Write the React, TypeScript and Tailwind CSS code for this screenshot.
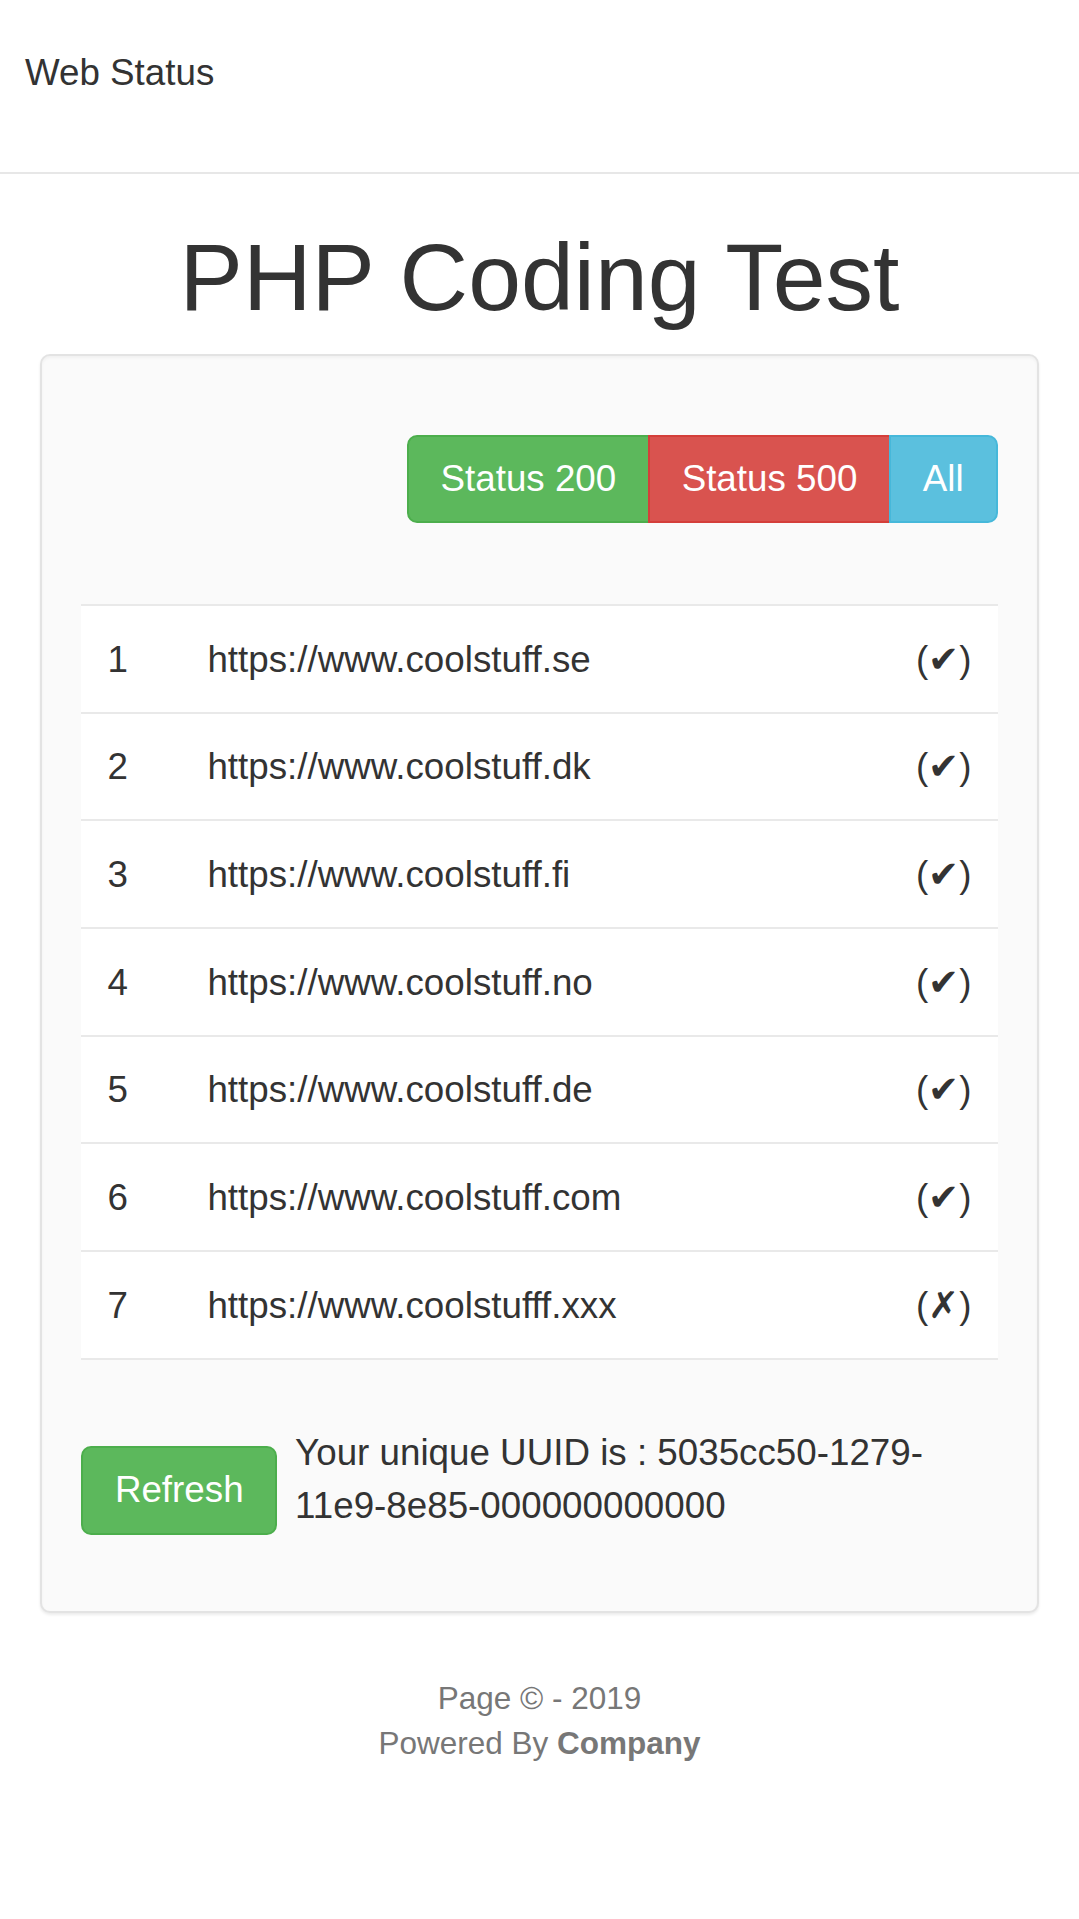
import React from "react";

const rows = [
  { n: 1, url: "https://www.coolstuff.se", ok: true },
  { n: 2, url: "https://www.coolstuff.dk", ok: true },
  { n: 3, url: "https://www.coolstuff.fi", ok: true },
  { n: 4, url: "https://www.coolstuff.no", ok: true },
  { n: 5, url: "https://www.coolstuff.de", ok: true },
  { n: 6, url: "https://www.coolstuff.com", ok: true },
  { n: 7, url: "https://www.coolstufff.xxx", ok: false },
];

export default function App() {
  return (
    <div
      className="min-h-[1919px] bg-white text-[#333] text-[36.75px] leading-[52.5px]"
      style={{ fontFamily: '"Liberation Sans", Arial, Helvetica, sans-serif' }}
    >
      <div className="h-[174px] border-b-[2.6px] border-[#e7e7e7] bg-white pt-[47px] pl-[25px]">
        <span className="text-[#333]">Web Status</span>
      </div>

      <div className="px-[40px]">
        <h1 className="mt-[51px] mb-[24.5px] text-center text-[95px] leading-[1.1] font-normal text-[#333]">
          PHP Coding Test
        </h1>

        <div className="rounded-[10px] border-[2.6px] border-[#e3e3e3] bg-[#fafafa] px-[39.4px] pt-[79px] pb-[76.5px] shadow-[inset_0_2px_3px_rgba(0,0,0,0.04),0_2px_3px_rgba(0,0,0,0.08)]">
          <div className="flex justify-end">
            <div className="flex h-[88px] text-white">
              <button className="rounded-l-[10px] border-[2.6px] border-[#4cae4c] bg-[#5cb85c] px-[32px]">
                Status 200
              </button>
              <button className="-ml-[2.6px] border-[2.6px] border-[#d43f3a] bg-[#d9534f] px-[32px]">
                Status 500
              </button>
              <button className="-ml-[2.6px] rounded-r-[10px] border-[2.6px] border-[#46b8da] bg-[#5bc0de] px-[32px]">
                All
              </button>
            </div>
          </div>

          <div className="mt-[81px] border-b-[2.6px] border-[#e9e9e9]">
            {rows.map((r) => (
              <div
                key={r.n}
                className="flex items-center border-t-[2.6px] border-[#e9e9e9] bg-white px-[26px] pt-[2px] h-[107.7px]"
              >
                <span className="w-[100px]">{r.n}</span>
                <span className="flex-1">{r.url}</span>
                <span>({r.ok ? "✔" : "✗"})</span>
              </div>
            ))}
          </div>

          <div className="mt-[65px] flex items-start">
            <button className="mt-[21px] h-[89px] shrink-0 rounded-[10px] border-[2.6px] border-[#4cae4c] bg-[#5cb85c] px-[31.5px] text-white">
              Refresh
            </button>
            <p className="ml-[18px] mt-[2.5px] flex-1">
              Your unique UUID is : 5035cc50-1279-11e9-8e85-000000000000
            </p>
          </div>
        </div>

        <div className="mt-[63px] text-center text-[31.5px] leading-[45px] text-[#777]">
          <div>Page © - 2019</div>
          <div>
            Powered By <b className="font-bold">Company</b>
          </div>
        </div>
      </div>
    </div>
  );
}
